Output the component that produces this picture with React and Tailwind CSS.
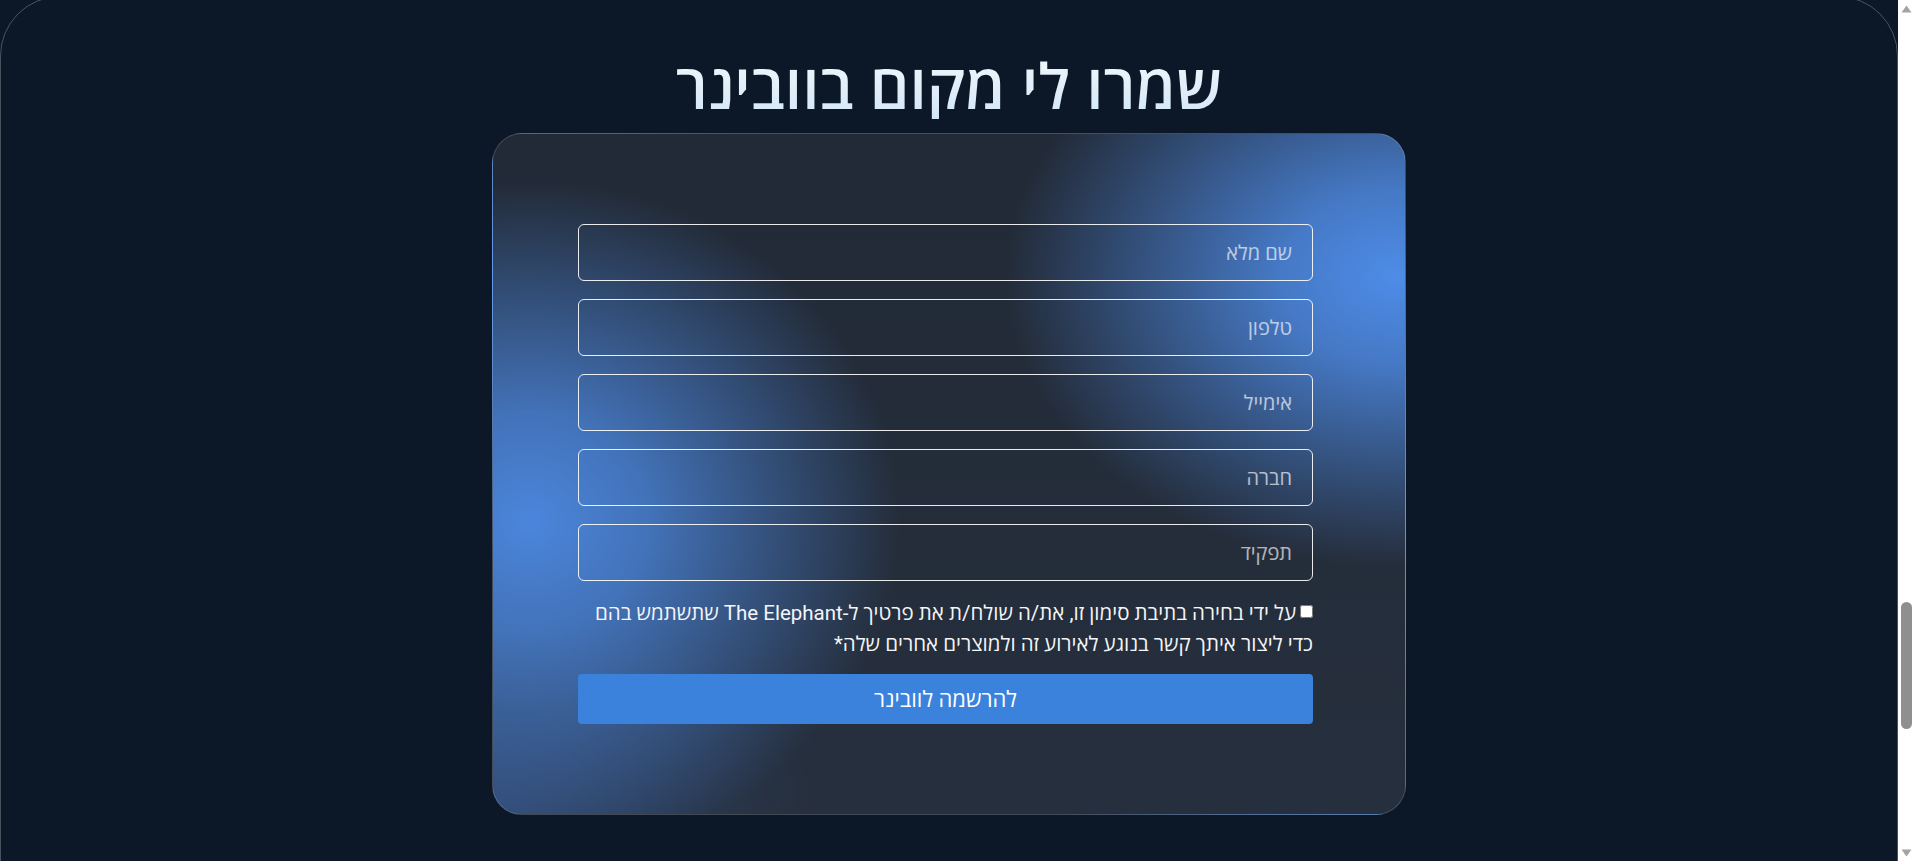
const fields = ["שם מלא", "טלפון", "אימייל", "חברה", "תפקיד"];

function Arrow({ down }) {
  return (
    <svg width="11" height="8" viewBox="0 0 11 8" className={down ? "rotate-180" : ""}>
      <path d="M5.5 0.5 L10.5 7.5 L0.5 7.5 Z" fill="#a3a3a3" />
    </svg>
  );
}

// classic window scrollbar, page is scrolled near the bottom
function Scrollbar() {
  return (
    <div className="w-[17px] h-screen shrink-0 bg-white flex flex-col items-center">
      <div className="h-[17px] flex items-center justify-center"><Arrow /></div>
      <div className="h-[585px]" />
      <div className="w-[11px] h-[127px] rounded-full bg-[#8f8f8f]" />
      <div className="flex-1" />
      <div className="h-[17px] flex items-center justify-center"><Arrow down /></div>
    </div>
  );
}

export default function App() {
  return (
    <div className="flex h-screen overflow-hidden bg-[#0c1827] text-white font-['Roboto','Open_Sans',sans-serif]">
      <main className="flex-1 min-w-0 h-screen overflow-hidden">
        <section dir="rtl" className="-mt-1 rounded-[60px] border border-white/25 pt-[54px] pb-[200px]">
          <h1 className="text-center text-[62px] leading-[1.1] font-semibold bg-gradient-to-b from-[#f2f8fd] to-[#d3e6f6] bg-clip-text text-transparent font-['Open_Sans','Roboto',sans-serif]">
            שמרו לי מקום בוובינר
          </h1>

          <div className="mx-auto mt-[14px] w-[914px] rounded-[30px] border border-white/15 pt-[90px] pb-[90px] pr-[92px] pl-[87px] bg-[radial-gradient(ellipse_390px_290px_at_99%_21%,rgba(78,140,232,1)_0%,rgba(78,140,232,0.8)_30%,rgba(78,140,232,0)_100%),radial-gradient(ellipse_370px_340px_at_4%_57%,rgba(75,134,220,1)_0%,rgba(75,134,220,0.78)_32%,rgba(75,134,220,0)_100%),radial-gradient(ellipse_320px_220px_at_0%_100%,rgba(60,100,170,0.4)_0%,rgba(60,100,170,0)_100%),linear-gradient(#222a37,#262f3d)]">
            <form className="w-[735px] flex flex-col" onSubmit={(e) => e.preventDefault()}>
              <div className="flex flex-col gap-[18px]">
                {fields.map((f) => (
                  <input
                    key={f}
                    type="text"
                    placeholder={f}
                    className="h-[57px] w-full rounded-md border border-white/90 bg-transparent px-5 text-[20px] text-white placeholder:text-white/65 outline-none font-['Open_Sans','Roboto',sans-serif]"
                  />
                ))}
              </div>

              <label className="mt-[17px] block text-[20.5px] leading-[31px] text-[#f3f5f8]">
                <input type="checkbox" className="ml-1 align-[2px]" />
                על ידי בחירה בתיבת סימון זו, את/ה שולח/ת את פרטיך ל-The Elephant שתשתמש בהם כדי ליצור איתך קשר בנוגע לאירוע זה ולמוצרים אחרים שלה*
              </label>

              <button
                type="submit"
                className="mt-[14px] h-[50px] w-full rounded-[4px] bg-[#3a82db] text-[22px] font-medium text-white"
              >
                להרשמה לוובינר
              </button>
            </form>
          </div>
        </section>
      </main>
      <Scrollbar />
    </div>
  );
}
